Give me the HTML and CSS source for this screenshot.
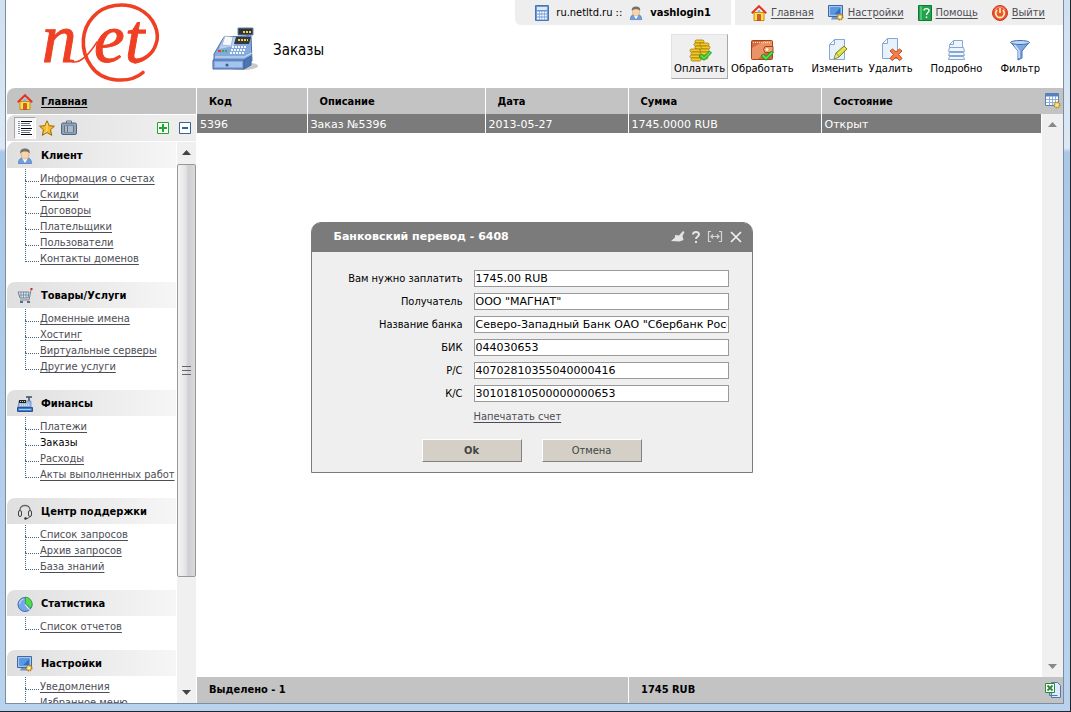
FILE: index.html
```html
<!DOCTYPE html>
<html lang="ru">
<head>
    <meta charset="UTF-8">
    <meta name="viewport" content="width=device-width, initial-scale=1.0">
    <title>Заказы</title>
    <link rel="stylesheet" href="styles.css">
</head>
<body>

<!-- Shared icons -->
<svg class="sprite" aria-hidden="true">
    <symbol id="i-home" viewBox="0 0 16 16">
        <path d="M3 7.500h10V15.500H3z" fill="#ffe04a" stroke="#c98a10"/>
        <path d="M.8 8.200 8 1.200l7.200 7" fill="none" stroke="#e5331d" stroke-width="2"/>
        <path d="M6.500 9.500h3v6h-3z" fill="#e2572b" stroke="#a5401b" stroke-width=".6"/>
        <circle cx="8" cy="6.300" r="1.300" fill="#7ab4e8"/>
    </symbol>
    <symbol id="i-user" viewBox="0 0 16 16">
        <path d="M1.500 15.500c0-4 2-5.500 4-5.500h5c2 0 4 1.500 4 5.500z" fill="#6f9fdf" stroke="#4673b5" stroke-width=".7"/>
        <path d="M5 10 8 15l3-5z" fill="#fff"/>
        <ellipse cx="8" cy="6.500" rx="4" ry="4.700" fill="#fbd3a8" stroke="#c49468" stroke-width=".5"/>
        <path d="M3.300 5.500C2.500 1.500 5.500.5 8 .5s5.500 1 4.700 5C11 3.500 9 3.600 8 3.600S5 3.500 3.300 5.500z" fill="#77716b"/>
    </symbol>
    <symbol id="i-monitor" viewBox="0 0 16 16">
        <path d="M.5.5h14v11H.5z" fill="#a6c6ec" stroke="#3d68a3"/>
        <path d="M2.500 2.500h10v7h-10z" fill="#2b6fc9"/>
        <path d="M2.500 2.500h10L6 9.500H2.500z" fill="#5a98e2"/>
        <path d="M4 12h6l1 2.500H3z" fill="#7894bd"/>
        <circle cx="12" cy="12" r="2.700" fill="#ffd873" stroke="#a77a1d" stroke-width="1.600" stroke-dasharray="1.400 .7"/>
        <circle cx="12" cy="12" r="1" fill="#fff"/>
    </symbol>
    <symbol id="i-check" viewBox="0 0 14 11">
        <path d="M1 6 3.500 4 6 6.500 11.500 1 13.500 3 6 10.300z" fill="#4be24b" stroke="#108a1c" stroke-width=".9"/>
    </symbol>
</svg>

<div class="window">
    <header class="header">
        <a class="logo" href="#" aria-label="net">
            <svg width="130" height="84" viewBox="34 0 130 84">
                <g fill="none" stroke="#f04023" stroke-width="3.600" stroke-linecap="round">
                    <path d="M143 72.500C131 83 103 84 91 66 79 49 82 29 93 17 104 4 125 2 139 9 155 17 160 34 156 44 153 54 144 60 135 62"/>
                    <path d="M73 62C82 63 90 53 97 42" stroke-width="1.500"/>
                </g>
                <g class="logo-text">
                    <text x="42" y="62">n</text>
                    <text x="94" y="62">e</text>
                    <text x="125" y="62">t</text>
                </g>
                <path d="M128 32h18" stroke="#f04023" stroke-width="3"/>
            </svg>
        </a>

        <div class="page-title">
            <svg width="48" height="48" viewBox="0 0 48 48">
                <ellipse cx="30" cy="40" rx="16" ry="4" fill="#c9c9c9"/>
                <path d="M34 8h3v7h-3z" fill="#7c9cc9"/>
                <path d="M26 2h15v7H26z" fill="#2f3338" stroke="#6484b2"/>
                <path d="M31 6h8" stroke="#f2d13c" stroke-width="2" stroke-dasharray="2 1"/>
                <path d="M12 11 39 10l1 25-8 2H2V28z" fill="#84a9dd" stroke="#4a6fa9"/>
                <path d="M12 11l14 0-4 9-15 3z" fill="#b9d1f2"/>
                <path d="M13 10l8 1-2 9-9-1z" fill="#f6f8fb" stroke="#8ba0be" stroke-width=".6"/>
                <path d="M24 11h15l-2 7H22z" fill="#33383f"/>
                <path d="M26 14h10" stroke="#f2d13c" stroke-width="2" stroke-dasharray="2 1"/>
                <path d="M20 21h15M19 24h15M18 27h15" stroke="#f1f6fc" stroke-width="2" stroke-dasharray="2 1"/>
                <path d="M6 25h3" stroke="#e4412c" stroke-width="2"/>
                <path d="M10 25h5" stroke="#40a84a" stroke-width="2" stroke-dasharray="2 1"/>
                <path d="M3 31h29l8-4" stroke="#dbe8f9" fill="none"/>
                <path d="M1 34h31v9H1z" fill="#83a8dd" stroke="#3f659f"/>
                <path d="M32 34l7-4v9l-7 4z" fill="#4b75b7" stroke="#3f659f"/>
                <path d="M3 36h27v5H3z" fill="#a6c3ec"/>
                <circle cx="15" cy="39" r="1.500" fill="#365c96"/>
            </svg>
            <h1>Заказы</h1>
        </div>

        <div class="header-right">
            <div class="top-bar">
                <div class="account">
                    <svg width="14" height="16" viewBox="0 0 14 16">
                        <path d="M.5.5h13v15H.5z" fill="#6d97d6" stroke="#4a74b5"/>
                        <path d="M2 2h10v3H2z" fill="#dbe8f8"/>
                        <path d="M2 7.500h10M2 10.500h10M2 13.500h10" stroke="#f5f9fe" stroke-width="2" stroke-dasharray="2 .6"/>
                    </svg>
                    <span>ru.netltd.ru ::</span>
                    <svg width="14" height="16"><use href="#i-user"/></svg>
                    <strong>vashlogin1</strong>
                </div>
                <nav class="top-links">
                    <a href="#"><svg width="16" height="16"><use href="#i-home"/></svg><span>Главная</span></a>
                    <a href="#"><svg width="16" height="16"><use href="#i-monitor"/></svg><span>Настройки</span></a>
                    <a href="#">
                        <svg width="14" height="16" viewBox="0 0 14 16">
                            <path d="M.5.5h13v15H.5z" fill="#22a34b" stroke="#0d7a30"/>
                            <path d="M3 1v14" stroke="#8be0a2"/>
                            <path d="M6 5.500C6 3 11 3 11 5.500 11 7.500 8.500 7.500 8.500 10M8.500 11.500v1.500" fill="none" stroke="#fff" stroke-width="1.400"/>
                        </svg><span>Помощь</span></a>
                    <a href="#">
                        <svg width="16" height="16" viewBox="0 0 16 16">
                            <circle cx="8" cy="8" r="7.500" fill="#ee5136" stroke="#c93a20"/>
                            <path d="M3 5C5 1 11 1 13 5" stroke="#ff9d80" fill="none"/>
                            <path d="M5.200 5a4.300 4.300 0 1 0 5.600 0M8 3v5" fill="none" stroke="#fff3a6" stroke-width="1.700"/>
                        </svg><span>Выйти</span></a>
                </nav>
            </div>
            <div class="toolbar">
                <div class="tool-group">
                    <button class="tool active" type="button">
                        <svg width="24" height="24" viewBox="0 0 24 24">
                            <path d="M7 3.500h8v18H7z" fill="#d9a911"/>
                            <g fill="#f0cb2c" stroke="#a27a08" stroke-width=".8">
                                <rect x="7" y="2" width="9" height="3" rx="1.500"/><rect x="6" y="5" width="9" height="3" rx="1.500"/>
                                <rect x="7" y="8" width="9" height="3" rx="1.500"/><rect x="12" y="5" width="9" height="3" rx="1.500"/>
                                <rect x="13" y="8" width="9" height="3" rx="1.500"/><rect x="12" y="11" width="9" height="3" rx="1.500"/>
                                <rect x="2" y="11" width="10" height="3" rx="1.500"/><rect x="3" y="14" width="10" height="3" rx="1.500"/>
                                <rect x="2" y="17" width="10" height="3" rx="1.500"/><rect x="3" y="20" width="10" height="3" rx="1.500"/>
                                <rect x="12" y="14" width="9" height="3" rx="1.500"/><rect x="12" y="18" width="8" height="3" rx="1.500"/>
                            </g>
                            <use href="#i-check" x="10" y="12" width="14" height="11"/>
                        </svg>Оплатить
                    </button>
                    <button class="tool" type="button">
                        <svg width="24" height="24" viewBox="0 0 24 24">
                            <rect x="1.500" y="2.500" width="21" height="19" rx="1" fill="#d46a3d" stroke="#a8421b"/>
                            <path d="M2 21V10L14 3h8v5L8 21z" fill="#e99368"/>
                            <path d="M3 4.500h18" stroke="#ffe1bd" stroke-dasharray="1 1"/>
                            <path d="M15 8.500h8v6h-8q-3-3 0-6z" fill="#f0a06d" stroke="#a8421b"/>
                            <circle cx="17" cy="11.500" r="1.500" fill="#fff0cf"/>
                            <use href="#i-check" x="10" y="12" width="14" height="11"/>
                        </svg>Обработать
                    </button>
                </div>
                <div class="tool-group">
                    <button class="tool" type="button">
                        <svg width="24" height="24" viewBox="0 0 24 24">
                            <path d="M9.500 1.500h10v20h-15v-15z" fill="#e8f2fd" stroke="#83a8d8"/>
                            <path d="M9.500 1.500v5h-5z" fill="#fff" stroke="#83a8d8"/>
                            <path d="M9 21l2-6 8-7 3 3-8 8z" fill="#d6d83b" stroke="#7f861d"/>
                            <path d="M9 21l2-6 3 4z" fill="#f3dfb0" stroke="#7f861d" stroke-width=".6"/>
                            <path d="M13 16l7-6" stroke="#f5f68d"/>
                        </svg>Изменить
                    </button>
                    <button class="tool" type="button">
                        <svg width="24" height="24" viewBox="0 0 24 24">
                            <path d="M8.500.5h10v20h-15v-15z" fill="#e8f2fd" stroke="#83a8d8"/>
                            <path d="M8.500.5v5h-5z" fill="#fff" stroke="#83a8d8"/>
                            <path d="M11 13l2.500-2 3.500 3 3.500-3 2.500 2-3.500 3.500 3.500 4-2.500 2-3.500-3.500-3.500 3.500-2.500-2 3.500-4z" fill="#f58148" stroke="#c9431d"/>
                        </svg>Удалить
                    </button>
                </div>
                <div class="tool-group">
                    <button class="tool" type="button">
                        <svg width="24" height="24" viewBox="0 0 24 24">
                            <g fill="#eef5fd" stroke="#86a8d3">
                                <path d="M8.500 2.500h9v7h-13v-3z"/><path d="M8.500 2.500v4h-4" fill="none"/>
                                <path d="M4.500 9.500h14l1 4h-16z"/><path d="M4.500 14.500h14l1 3h-16z"/><path d="M4.500 18.500h14l1 3h-16z"/>
                            </g>
                        </svg>Подробно
                    </button>
                </div>
                <div class="tool-group">
                    <button class="tool" type="button">
                        <svg width="24" height="24" viewBox="0 0 24 24">
                            <path d="M3 4.500 10 13v9l4-2v-7l7-8.500z" fill="#7fa7e2" stroke="#446fae"/>
                            <path d="M6 6l5 7v7" fill="none" stroke="#cfe1f8" stroke-width="1.500"/>
                            <ellipse cx="12" cy="4.500" rx="9.500" ry="2" fill="#bed6f5" stroke="#446fae"/>
                        </svg>Фильтр
                    </button>
                </div>
            </div>
        </div>
    </header>

    <div class="workspace">
        <aside class="sidebar">
            <div class="side-home">
                <svg width="16" height="16"><use href="#i-home"/></svg>
                <a href="#">Главная</a>
            </div>
            <div class="side-tools">
                <button class="mode pressed" type="button" aria-label="Список">
                    <svg width="16" height="16" viewBox="0 0 16 16">
                        <path d="M0 0h16v16H0z" fill="#fff"/>
                        <path d="M1 1.500h2M1 3.500h2M1 5.500h2M1 7.500h2M1 9.500h2M1 11.500h2M1 13.500h2" stroke="#7c93b8"/>
                        <path d="M4 1.500h11M4 8.500h11M4 14.500h11" stroke="#000"/>
                        <path d="M4 3.500h9M4 5.500h10M4 10.500h10M4 12.500h9" stroke="#63718c"/>
                    </svg>
                </button>
                <button class="mode" type="button" aria-label="Избранное">
                    <svg width="16" height="16" viewBox="0 0 16 16">
                        <path d="M8 .8l2.200 4.900 5.200.5-3.900 3.600 1.200 5.500L8 12.500l-4.700 2.800 1.200-5.500L.6 6.200l5.200-.5z" fill="#f7b928" stroke="#9b6408"/>
                        <path d="M8 3v8l-3 2" fill="none" stroke="#ffe58a"/>
                    </svg>
                </button>
                <button class="mode" type="button" aria-label="Портфель">
                    <svg width="16" height="16" viewBox="0 0 16 16">
                        <path d="M5.500 3V1h5v2" fill="none" stroke="#5b7087"/>
                        <rect x=".5" y="3" width="15" height="11.500" rx="1.500" fill="#8fa4b9" stroke="#4f667e"/>
                        <path d="M3 5.500h10v7H3z" fill="#5d748b"/>
                        <path d="M4 7h2M7 7h5M4 9h2M7 9h5M4 11h2M7 11h5" stroke="#fff"/>
                    </svg>
                </button>
                <span class="spacer"></span>
                <button class="mode fold" type="button" aria-label="Развернуть все">
                    <svg width="12" height="12" viewBox="0 0 12 12"><path d="M.5.5h11v11H.5z" fill="#fff" stroke="#1fa82d"/><path d="M6 2v8M2 6h8" stroke="#1fa82d" stroke-width="2"/></svg>
                </button>
                <button class="mode fold" type="button" aria-label="Свернуть все">
                    <svg width="12" height="12" viewBox="0 0 12 12"><path d="M.5.5h11v11H.5z" fill="#fff" stroke="#3a6294"/><path d="M3 6h6" stroke="#3a6294" stroke-width="2"/></svg>
                </button>
            </div>

            <div class="side-body">
                <nav class="menu">
                    <section>
                        <h2><svg width="16" height="16"><use href="#i-user"/></svg>Клиент</h2>
                        <ul>
                            <li><a href="#">Информация о счетах</a></li>
                            <li><a href="#">Скидки</a></li>
                            <li><a href="#">Договоры</a></li>
                            <li><a href="#">Плательщики</a></li>
                            <li><a href="#">Пользователи</a></li>
                            <li><a href="#">Контакты доменов</a></li>
                        </ul>
                    </section>
                    <section>
                        <h2><svg width="16" height="16" viewBox="0 0 16 16">
                            <path d="M1 4h11l-1 6H3z" fill="#e1e8f1" stroke="#71849b"/>
                            <path d="M2 7h9M4 4v6M6.500 4v6M9 4v6" stroke="#71849b" stroke-width=".8"/>
                            <path d="M14 2l-2 10H3" fill="none" stroke="#71849b"/>
                            <path d="M13.500 1h2" stroke="#e02020" stroke-width="2"/>
                            <path d="M3 14h3M10 14h3" stroke="#5c6d82" stroke-width="2"/>
                        </svg>Товары/Услуги</h2>
                        <ul>
                            <li><a href="#">Доменные имена</a></li>
                            <li><a href="#">Хостинг</a></li>
                            <li><a href="#">Виртуальные серверы</a></li>
                            <li><a href="#">Другие услуги</a></li>
                        </ul>
                    </section>
                    <section>
                        <h2><svg width="16" height="16" viewBox="0 0 16 16">
                            <path d="M9 1h6M12 1v5" stroke="#39506f" stroke-width="1.500"/>
                            <path d="M2 5h12v6H1z" fill="#9dbce6" stroke="#5c80b5" stroke-width=".7"/>
                            <path d="M2 4h7v3H2z" fill="#20242a"/><path d="M3 5.500h5" stroke="#efd13c" stroke-dasharray="1 1"/>
                            <path d="M3 9h10" stroke="#fff" stroke-dasharray="1 1"/>
                            <path d="M.5 11.500h15v4H.5z" fill="#3e7bcb" stroke="#265494"/><path d="M2 13.500h12" stroke="#a9cbf4"/>
                        </svg>Финансы</h2>
                        <ul>
                            <li><a href="#">Платежи</a></li>
                            <li>Заказы</li>
                            <li><a href="#">Расходы</a></li>
                            <li><a href="#">Акты выполненных работ</a></li>
                        </ul>
                    </section>
                    <section>
                        <h2><svg width="16" height="16" viewBox="0 0 16 16">
                            <path d="M3 8V6c0-6 10-6 10 0v2" fill="none" stroke="#666" stroke-width="1.300"/>
                            <rect x="1.500" y="6.500" width="3" height="6" rx="1.500" fill="#ddd" stroke="#444"/>
                            <rect x="11.500" y="6.500" width="3" height="6" rx="1.500" fill="#ddd" stroke="#444"/>
                            <path d="M13 12.500Q12 15 8 14.500" fill="none" stroke="#444"/><circle cx="8.500" cy="14.500" r="1.300" fill="#333"/>
                        </svg>Центр поддержки</h2>
                        <ul>
                            <li><a href="#">Список запросов</a></li>
                            <li><a href="#">Архив запросов</a></li>
                            <li><a href="#">База знаний</a></li>
                        </ul>
                    </section>
                    <section>
                        <h2><svg width="16" height="16" viewBox="0 0 16 16">
                            <circle cx="8" cy="8.500" r="7" fill="#77a7ea" stroke="#3d6db5"/>
                            <path d="M8.500 8V1.200A7 7 0 0 1 14 12z" fill="#58d84e" stroke="#229a2c" stroke-width=".7"/>
                            <path d="M8 8.500 12.500 14" stroke="#fff"/><path d="M2.500 8q0-4 4-5" fill="none" stroke="#d1e4fb"/>
                        </svg>Статистика</h2>
                        <ul>
                            <li><a href="#">Список отчетов</a></li>
                        </ul>
                    </section>
                    <section>
                        <h2><svg width="16" height="16"><use href="#i-monitor"/></svg>Настройки</h2>
                        <ul>
                            <li><a href="#">Уведомления</a></li>
                            <li><a href="#">Избранное меню</a></li>
                        </ul>
                    </section>
                </nav>
                <div class="scrollbar side-scroll">
                    <svg class="arrow" width="9" height="5" viewBox="0 0 9 5"><path d="M0 5 4.500 0 9 5z"/></svg>
                    <div class="thumb"><i></i></div>
                    <div class="track"></div>
                    <svg class="arrow" width="9" height="5" viewBox="0 0 9 5"><path d="M0 0h9L4.500 5z"/></svg>
                </div>
            </div>
        </aside>

        <main class="content">
            <div class="grid-area">
                <div class="table-wrap">
                    <table class="orders">
                        <colgroup>
                            <col class="c-code"><col class="c-desc"><col class="c-date"><col class="c-sum"><col>
                        </colgroup>
                        <thead>
                            <tr><th>Код</th><th>Описание</th><th>Дата</th><th>Сумма</th><th>Состояние</th></tr>
                        </thead>
                        <tbody>
                            <tr><td>5396</td><td>Заказ №5396</td><td>2013-05-27</td><td>1745.0000 RUB</td><td>Открыт</td></tr>
                        </tbody>
                    </table>
                </div>
                <div class="grid-side">
                    <button class="columns-btn" type="button" aria-label="Настройка колонок">
                        <svg width="16" height="16" viewBox="0 0 16 16">
                            <path d="M.5.5h13v12H.5z" fill="#fff" stroke="#5580bd"/>
                            <path d="M1 2h12" stroke="#5580bd" stroke-width="3"/>
                            <path d="M1 6.500h12M1 9.500h12M4.500 3v9M7.500 3v9M10.500 3v9" stroke="#8fb0dd"/>
                            <circle cx="12" cy="12" r="2.700" fill="#ffe18a" stroke="#b88a22" stroke-width="1.600" stroke-dasharray="1.400 .7"/>
                        </svg>
                    </button>
                    <div class="scrollbar grid-scroll">
                        <svg class="arrow" width="9" height="5" viewBox="0 0 9 5"><path d="M0 5 4.500 0 9 5z"/></svg>
                        <div class="track"></div>
                        <svg class="arrow" width="9" height="5" viewBox="0 0 9 5"><path d="M0 0h9L4.500 5z"/></svg>
                    </div>
                </div>
            </div>
            <footer class="summary">
                <div class="selected">Выделено - 1</div>
                <div class="total">1745 RUB</div>
                <button class="export" type="button" aria-label="Экспорт в Excel">
                    <svg width="16" height="16" viewBox="0 0 16 16">
                        <path d="M6.500.5h6l3 3v12h-9z" fill="#dfeafa" stroke="#4c77b8"/>
                        <path d="M4.500 10v3.500h8" fill="none" stroke="#4c77b8"/>
                        <path d="M.5 1.500h9v9h-9z" fill="#fff" stroke="#2a8a35"/>
                        <path d="M2.500 3.500l5 5M7.500 3.500l-5 5" stroke="#2a8a35" stroke-width="1.800"/>
                    </svg>
                </button>
            </footer>
        </main>
    </div>

    <!-- Payment form -->
    <div class="overlay">
        <form class="dialog" role="dialog" aria-labelledby="dlg-title">
            <div class="dialog-head">
                <h2 id="dlg-title">Банковский перевод - 6408</h2>
                <div class="dialog-tools">
                    <button type="button" aria-label="Очистить"><svg width="14" height="14" viewBox="0 0 14 14"><path d="M0 11 4 7.500V5l4 .5L12 1l1.500 1L11.500 6l1 4-4 1.500z" fill="#e4e4e4"/></svg></button>
                    <button type="button" aria-label="Справка"><svg width="10" height="14" viewBox="0 0 10 14"><path d="M2 4.500C2 1 8 1 8 4.500 8 6.500 5 6.500 5 9M5 11v2" fill="none" stroke="#e4e4e4" stroke-width="2"/></svg></button>
                    <button type="button" aria-label="Ширина"><svg width="16" height="14" viewBox="0 0 16 14"><path d="M4 1.500H1.500v10H4M12 1.500h2.500v10H12M4 6.500h8M6 4.500l-2 2 2 2M10 4.500l2 2-2 2" fill="none" stroke="#d4d4d4" stroke-width="1.200"/></svg></button>
                    <button type="button" aria-label="Закрыть"><svg width="14" height="14" viewBox="0 0 14 14"><path d="M2 2l10 10M12 2 2 12" stroke="#f0f0f0" stroke-width="1.700"/></svg></button>
                </div>
            </div>
            <div class="fields">
                <label for="amount">Вам нужно заплатить</label><input id="amount" type="text" value="1745.00 RUB">
                <label for="payee">Получатель</label><input id="payee" type="text" value="ООО &quot;МАГНАТ&quot;">
                <label for="bank">Название банка</label><input id="bank" type="text" value="Северо-Западный Банк ОАО &quot;Сбербанк России&quot;">
                <label for="bik">БИК</label><input id="bik" type="text" value="044030653">
                <label for="rs">Р/С</label><input id="rs" type="text" value="40702810355040000416">
                <label for="ks">К/С</label><input id="ks" type="text" value="30101810500000000653">
                <a class="print" href="#">Напечатать счет</a>
            </div>
            <div class="buttons">
                <button class="btn ok" type="button">Ok</button>
                <button class="btn" type="button">Отмена</button>
            </div>
        </form>
    </div>
</div>

</body>
</html>
```
FILE: styles.css
```css
* {
    box-sizing: border-box;
}
body {
    margin: 0;
    height: 100vh;
    padding: 0 6px 7px 5px;
    border-right: 1px solid #20262e;
    border-bottom: 1px solid #20262e;
    background: linear-gradient(#cfe0f1 0, #dce8f4 148px, #a9c8e8 152px, #b9d3ee 100%);
    font: 11px/16px "DejaVu Sans Condensed", "DejaVu Sans", Tahoma, sans-serif;
    color: #000;
    overflow: hidden;
}
h1, h2, ul {
    margin: 0;
    padding: 0;
    font-size: 11px;
}
button {
    font: inherit;
    color: inherit;
    background: none;
    border: none;
    padding: 0;
}
a {
    color: #4d4d55;
    text-underline-offset: 2px;
}
svg {
    display: block;
    flex: none;
}
.sprite {
    position: absolute;
    width: 0;
    height: 0;
}
.window {
    position: relative;
    height: 100%;
    display: flex;
    flex-direction: column;
    background: #fff;
    border: 1px solid #7d8da1;
    border-top: none;
    padding-left: 1px;
}

/* Header */
.header {
    display: flex;
    height: 88px;
    flex: none;
}
.logo {
    margin-left: 27px;
}
.logo-text {
    font: italic 69px "Liberation Serif", serif;
    fill: #f04023;
    stroke: #f04023;
    stroke-width: 1px;
}
.page-title {
    display: flex;
    align-items: center;
    gap: 13px;
    margin-left: 48px;
    padding-top: 12px;
}
.page-title h1 {
    font-size: 15px;
    font-weight: normal;
}
.header-right {
    margin-left: auto;
    display: flex;
    flex-direction: column;
    align-items: flex-end;
}
.top-bar {
    display: flex;
    gap: 4px;
    height: 25px;
}
.account, .top-links {
    display: flex;
    align-items: center;
    background: #eee;
}
.account {
    gap: 7px;
    padding: 0 20px;
    border-bottom-left-radius: 6px;
}
.top-links {
    gap: 14px;
    padding: 0 18px 0 16px;
}
.top-links a {
    display: flex;
    align-items: center;
    gap: 4px;
    text-decoration: none;
}
.top-links span {
    text-decoration: underline;
    text-underline-offset: 2px;
}
.toolbar {
    display: flex;
    gap: 12px;
    margin: 9px 20px 0 0;
}
.tool-group {
    display: flex;
}
.tool {
    display: flex;
    flex-direction: column;
    align-items: center;
    height: 45px;
    padding: 3px 2px 0;
    border: 1px solid transparent;
    font: 10px/14px "DejaVu Sans", Verdana, sans-serif;
}
.tool.active {
    background: #efefef;
    border-color: #e2e2e2 #a8a8a8 #a8a8a8 #e2e2e2;
}

/* Sidebar */
.workspace {
    flex: 1;
    min-height: 0;
    display: flex;
    gap: 1px;
}
.sidebar {
    width: 189px;
    flex: none;
    display: flex;
    flex-direction: column;
    gap: 1px;
}
.side-home {
    display: flex;
    align-items: center;
    gap: 8px;
    height: 26px;
    flex: none;
    padding: 2px 0 0 10px;
    background: #c3c3c3;
    border-top-left-radius: 8px;
    font-weight: bold;
}
.side-home a {
    color: #000;
}
.side-tools {
    display: flex;
    align-items: center;
    height: 26px;
    flex: none;
    padding: 0 5px 0 7px;
    background: linear-gradient(90deg, #dedede, #ededed 80%);
    border-top-left-radius: 8px;
}
.mode {
    padding: 3px;
}
.mode.pressed {
    border: 1px solid;
    border-color: #a5a5ad #fff #fff #a5a5ad;
    background: #f6f6f6;
    padding: 2px;
}
.mode.fold {
    padding: 0;
    margin-left: 10px;
}
.spacer {
    flex: 1;
}
.side-body {
    flex: 1;
    min-height: 0;
    display: flex;
    gap: 1px;
}
.menu {
    flex: 1;
    overflow: hidden;
}
.menu h2 {
    position: relative;
    z-index: 1;
    display: flex;
    align-items: center;
    gap: 8px;
    height: 26px;
    padding: 2px 0 0 10px;
    background: linear-gradient(90deg, #dfdfdf, #f6f6f6);
    border-top-left-radius: 8px;
}
.menu ul {
    list-style: none;
    padding: 3px 0 15px 18px;
}
.menu li {
    position: relative;
    height: 16px;
    padding-left: 15px;
    white-space: nowrap;
}
.menu li::before {
    content: "";
    position: absolute;
    left: 0;
    top: -7px;
    width: 13px;
    height: 17px;
    border: dotted #3d6a8a;
    border-width: 0 0 1px 1px;
}
.scrollbar {
    display: flex;
    flex-direction: column;
    align-items: center;
    background: #f0f0f0;
}
.side-scroll {
    width: 19px;
    padding: 8px 0;
}
.arrow {
    fill: #444;
}
.thumb {
    width: 19px;
    flex: 410;
    margin-top: 9px;
    display: flex;
    align-items: center;
    justify-content: center;
    border: 1px solid #979797;
    border-radius: 2px;
    background: linear-gradient(90deg, #f4f4f4, #e4e4e6 45%, #cfcfd3 60%, #dadadc);
}
.thumb i {
    width: 9px;
    height: 9px;
    border: solid #666;
    border-width: 1px 0;
    background: linear-gradient(transparent 3px, #666 3px, #666 4px, transparent 4px);
}
.track {
    flex: 113;
}

/* Orders table */
.content {
    flex: 1;
    min-width: 0;
    display: flex;
    flex-direction: column;
}
.grid-area {
    flex: 1;
    display: flex;
}
.table-wrap {
    flex: 1;
}
.orders {
    width: 100%;
    table-layout: fixed;
    border-collapse: collapse;
    text-align: left;
}
.c-code {
    width: 110px;
}
.c-desc {
    width: 178px;
}
.c-date {
    width: 143px;
}
.c-sum {
    width: 193px;
}
.orders th {
    height: 26px;
    padding: 2px 12px 0;
    background: #c3c3c3;
}
.orders td {
    height: 19px;
    padding: 2px 3px 0;
    background: #7b7b7b;
    color: #fff;
    font-family: "DejaVu Sans", Verdana, sans-serif;
}
.orders th:not(:last-child), .orders td:not(:last-child) {
    border-right: 1px solid #fff;
}
.grid-side {
    width: 22px;
    display: flex;
    flex-direction: column;
}
.columns-btn {
    height: 26px;
    padding-left: 4px;
    background: #c3c3c3;
}
.grid-scroll {
    flex: 1;
    margin-left: 1px;
    padding: 8px 0;
}
.grid-scroll .arrow {
    fill: #888;
}
.summary {
    display: flex;
    align-items: center;
    height: 26px;
    flex: none;
    background: #c3c3c3;
    font-weight: bold;
    line-height: 26px;
}
.selected {
    width: 432px;
    padding-left: 12px;
    border-right: 1px solid #fff;
}
.total {
    flex: 1;
    padding-left: 12px;
}
.export {
    margin-right: 2px;
}

/* Dialog */
.overlay {
    position: absolute;
    inset: 0;
    display: flex;
    align-items: center;
    justify-content: center;
    padding: 0 6px 9px 0;
}
.dialog {
    width: 442px;
    background: #efefef;
    border: 1px solid #7b7b7b;
    border-radius: 10px 10px 0 0;
}
.dialog-head {
    display: flex;
    align-items: center;
    justify-content: space-between;
    height: 29px;
    padding: 0 9px 0 22px;
    background: #7b7b7b;
    border-radius: 8px 8px 0 0;
    color: #fff;
}
.dialog-head h2 {
    font-family: "DejaVu Sans", Verdana, sans-serif;
}
.dialog-tools {
    display: flex;
    gap: 6px;
}
.fields {
    display: grid;
    grid-template-columns: 1fr 255px;
    gap: 6px 11px;
    padding: 18px 23px 0 0;
    line-height: 17px;
}
.fields label {
    text-align: right;
}
.fields input {
    height: 17px;
    width: 100%;
    padding: 1px 1px 0;
    border: 1px solid #9a9a9a;
    background: #fff;
    font: 11px "DejaVu Sans", Verdana, sans-serif;
}
.print {
    grid-column: 2;
    justify-self: start;
}
.buttons {
    display: flex;
    gap: 20px;
    justify-content: center;
    padding: 14px 0 10px;
}
.btn {
    width: 100px;
    height: 23px;
    padding-top: 2px;
    background: #d4d0c8;
    border: 1px solid;
    border-color: #fff #808080 #808080 #fff;
    color: #444;
}
.btn.ok {
    font-weight: bold;
}
```
